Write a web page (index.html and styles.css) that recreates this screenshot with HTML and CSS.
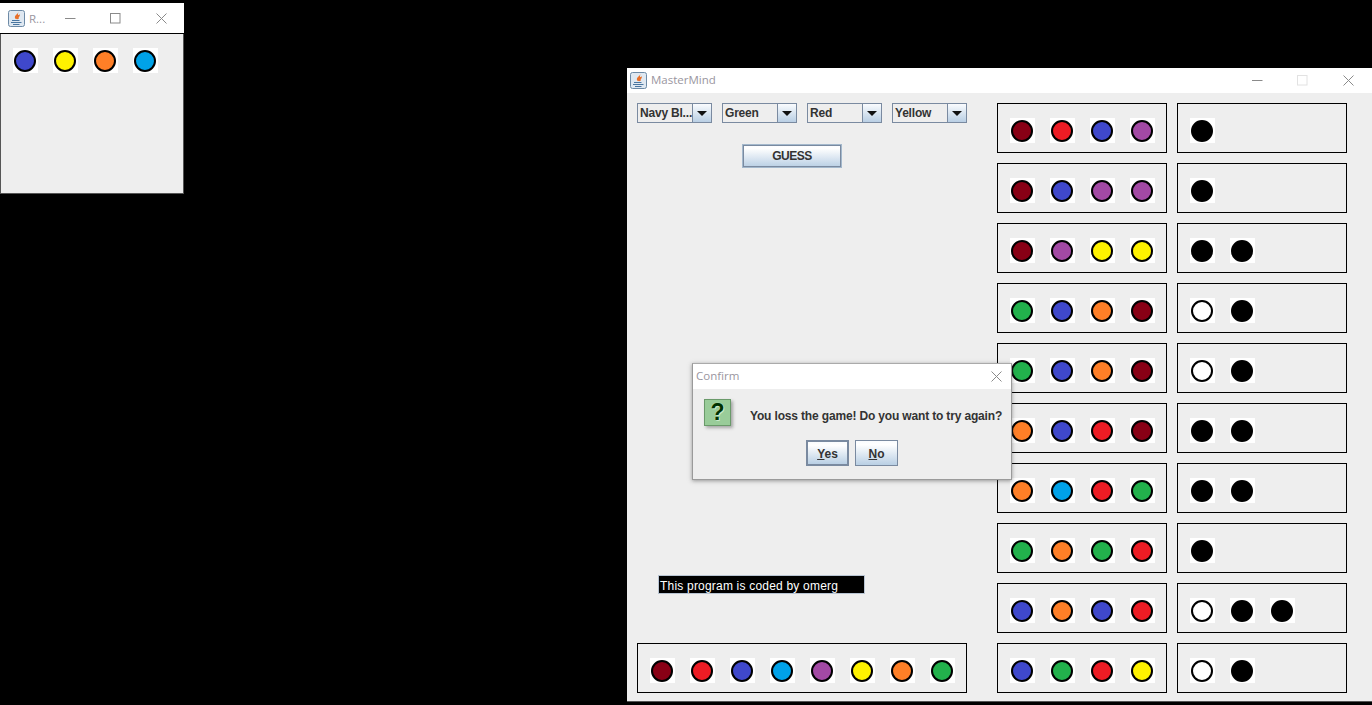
FILE: index.html

```html
<!DOCTYPE html>
<html lang="en">
<head>
  <meta charset="UTF-8" />
  <title>MasterMind</title>
  <link rel="stylesheet" href="styles.css">
</head>
<body>

  <svg class="defs" width="0" height="0">
    <symbol id="java" viewBox="0 0 17 17">
      <rect x="0.5" y="0.5" width="16" height="16" rx="2" fill="#dfe8f1" stroke="#6d8aa6"/>
      <path d="M10 1.5c1 2.500-4 3.500-3 6.500 0.500 1.500 3 1.500 4 0.500-1.500-1 2-2.500 0.500-4.500 0 1-1.500 1.500-1.500 0.500 0-1 0.500-2-0-3z" fill="#e8702a"/>
      <path d="M4 10.500h7.500M3 12.500h10.500M5 14.500h6.500" stroke="#4a76a0" stroke-width="1" fill="none"/>
    </symbol>
    <symbol id="min" viewBox="0 0 11 11"><path d="M0 5.500h10.500" stroke="currentColor" fill="none"/></symbol>
    <symbol id="max" viewBox="0 0 11 11"><rect x="0.500" y="0.500" width="9.500" height="9.500" stroke="currentColor" fill="none"/></symbol>
    <symbol id="close" viewBox="0 0 11 11"><path d="M0.500 0.500l10 10M10.500 0.500l-10 10" stroke="currentColor" fill="none"/></symbol>
  </svg>

  <!-- secret code window -->
  <div class="window code-window">
    <div class="titlebar code-titlebar">
      <svg class="app-icon"><use href="#java"/></svg>
      <span class="title">R...</span>
      <div class="controls">
        <span class="ctl"><svg><use href="#min"/></svg></span>
        <span class="ctl"><svg><use href="#max"/></svg></span>
        <span class="ctl"><svg><use href="#close"/></svg></span>
      </div>
    </div>
    <div class="code-body">
      <span class="peg blue"></span>
      <span class="peg yellow"></span>
      <span class="peg orange"></span>
      <span class="peg cyan"></span>
    </div>
  </div>

  <!-- game window -->
  <div class="window game-window">
    <div class="titlebar game-titlebar">
      <svg class="app-icon"><use href="#java"/></svg>
      <span class="title">MasterMind</span>
      <div class="controls">
        <span class="ctl"><svg><use href="#min"/></svg></span>
        <span class="ctl off"><svg><use href="#max"/></svg></span>
        <span class="ctl"><svg><use href="#close"/></svg></span>
      </div>
    </div>

    <div class="game-body">
      <div class="left">
        <div class="combos">
          <div class="combo"><span class="combo-text">Navy Bl...</span><span class="combo-btn"></span></div>
          <div class="combo"><span class="combo-text">Green</span><span class="combo-btn"></span></div>
          <div class="combo"><span class="combo-text">Red</span><span class="combo-btn"></span></div>
          <div class="combo"><span class="combo-text">Yellow</span><span class="combo-btn"></span></div>
        </div>
        <button class="btn guess">GUESS</button>
        <div class="credit">This program is coded by omerg</div>
        <div class="box palette">
          <span class="peg maroon"></span>
          <span class="peg red"></span>
          <span class="peg blue"></span>
          <span class="peg cyan"></span>
          <span class="peg purple"></span>
          <span class="peg yellow"></span>
          <span class="peg orange"></span>
          <span class="peg green"></span>
        </div>
      </div>

      <div class="board">
        <div class="box"><span class="peg maroon"></span><span class="peg red"></span><span class="peg blue"></span><span class="peg purple"></span></div>
        <div class="box"><span class="peg black"></span></div>

        <div class="box"><span class="peg maroon"></span><span class="peg blue"></span><span class="peg purple"></span><span class="peg purple"></span></div>
        <div class="box"><span class="peg black"></span></div>

        <div class="box"><span class="peg maroon"></span><span class="peg purple"></span><span class="peg yellow"></span><span class="peg yellow"></span></div>
        <div class="box"><span class="peg black"></span><span class="peg black"></span></div>

        <div class="box"><span class="peg green"></span><span class="peg blue"></span><span class="peg orange"></span><span class="peg maroon"></span></div>
        <div class="box"><span class="peg white"></span><span class="peg black"></span></div>

        <div class="box"><span class="peg green"></span><span class="peg blue"></span><span class="peg orange"></span><span class="peg maroon"></span></div>
        <div class="box"><span class="peg white"></span><span class="peg black"></span></div>

        <div class="box"><span class="peg orange"></span><span class="peg blue"></span><span class="peg red"></span><span class="peg maroon"></span></div>
        <div class="box"><span class="peg black"></span><span class="peg black"></span></div>

        <div class="box"><span class="peg orange"></span><span class="peg cyan"></span><span class="peg red"></span><span class="peg green"></span></div>
        <div class="box"><span class="peg black"></span><span class="peg black"></span></div>

        <div class="box"><span class="peg green"></span><span class="peg orange"></span><span class="peg green"></span><span class="peg red"></span></div>
        <div class="box"><span class="peg black"></span></div>

        <div class="box"><span class="peg blue"></span><span class="peg orange"></span><span class="peg blue"></span><span class="peg red"></span></div>
        <div class="box"><span class="peg white"></span><span class="peg black"></span><span class="peg black"></span></div>

        <div class="box"><span class="peg blue"></span><span class="peg green"></span><span class="peg red"></span><span class="peg yellow"></span></div>
        <div class="box"><span class="peg white"></span><span class="peg black"></span></div>
      </div>
    </div>

    <!-- confirm dialog -->
    <div class="dialog">
      <div class="dialog-title">
        <span class="title">Confirm</span>
        <svg class="dialog-close"><use href="#close"/></svg>
      </div>
      <div class="dialog-msg">
        <div class="question">?</div>
        <div class="msg-text">You loss the game! Do you want to try again?</div>
      </div>
      <div class="dialog-btns">
        <button class="btn focused"><u>Y</u>es</button>
        <button class="btn"><u>N</u>o</button>
      </div>
    </div>
  </div>

</body>
</html>
```

FILE: styles.css

```css
html, body {
  margin: 0;
  height: 100%;
}
body {
  background: #000;
  font-family: "Liberation Sans", Arial, sans-serif;
  overflow: hidden;
}
.defs {
  display: block;
  height: 0;
}

/* windows */
.window {
  position: absolute;
  box-sizing: border-box;
  background: #eeeeee;
  display: flex;
  flex-direction: column;
}
.code-window {
  left: 0;
  top: 3px;
  width: 184px;
  height: 191px;
  border: 1px solid #555;
  border-top: 0;
}
.game-window {
  left: 627px;
  top: 68px;
  width: 745px;
  height: 634px;
  border-bottom: 1px solid #555;
}
.titlebar {
  height: 25px;
  background: #fff;
  display: flex;
  align-items: center;
  flex-shrink: 0;
}
.game-titlebar {
  padding: 0 1px 1px 3px;
  box-sizing: border-box;
}
.game-titlebar .title,
.dialog-title .title {
  margin-bottom: 2px;
}
.code-titlebar {
  height: 30px;
  border-bottom: 1px solid #000;
  margin: 0 -1px;
  padding-left: 8px;
}
.app-icon {
  width: 17px;
  height: 17px;
  margin-right: 4px;
}
.title {
  font-family: "Open Sans", "Noto Sans", sans-serif;
  font-size: 11.5px;
  color: #9a96a0;
}
.controls {
  margin-left: auto;
  display: flex;
  color: #8a8a8a;
}
.ctl {
  width: 45.500px;
  height: 24px;
  display: flex;
  align-items: center;
  justify-content: center;
}
.ctl svg {
  width: 11px;
  height: 11px;
}
.ctl.off {
  color: #e2e2e2;
}

/* pegs */
.peg {
  width: 25px;
  height: 25px;
  box-sizing: border-box;
  padding: 2px 1px 1px 1px;
  background: #fff;
  flex-shrink: 0;
  display: flex;
}
.peg::after {
  content: "";
  width: 22px;
  height: 22px;
  box-sizing: border-box;
  border: 2px solid #000;
  border-radius: 50%;
  background: var(--fill);
}
.maroon { --fill: #880015; }
.red { --fill: #ed1c24; }
.blue { --fill: #3f48cc; }
.cyan { --fill: #00a2e8; }
.purple { --fill: #a349a4; }
.yellow { --fill: #fff200; }
.orange { --fill: #ff7f27; }
.green { --fill: #22b14c; }
.black { --fill: #000; }
.white { --fill: #fff; }

.code-body {
  display: flex;
  gap: 15px;
  padding: 14px 12px;
}

/* game layout */
.game-body {
  display: flex;
  gap: 30px;
  flex: 1;
  padding: 10px 0 0 10px;
}
.left {
  width: 330px;
  height: 590px;
  display: flex;
  flex-direction: column;
}
.combos {
  display: flex;
  gap: 10px;
}
.combo {
  width: 75px;
  height: 20px;
  box-sizing: border-box;
  border: 1px solid #7a8aa0;
  display: flex;
  font-size: 12px;
  font-weight: bold;
  color: #333;
}
.combo-text {
  flex: 1;
  padding-left: 2px;
  line-height: 19px;
  letter-spacing: -0.2px;
  white-space: nowrap;
}
.combo-btn {
  width: 19px;
  box-sizing: border-box;
  border-left: 1px solid #7a8aa0;
  background: linear-gradient(#fafcfe, #b9cfe4);
  display: flex;
  align-items: center;
  justify-content: center;
}
.combo-btn::after {
  content: "";
  border-top: 5px solid #111;
  border-left: 5px solid transparent;
  border-right: 5px solid transparent;
}
.btn {
  font-family: "Liberation Sans", Arial, sans-serif;
  font-size: 12px;
  font-weight: bold;
  color: #333;
  padding: 0;
  border: 1px solid #7a8aa0;
  background: linear-gradient(#fafcfe, #fff 15%, #b9cfe4);
}
.guess {
  width: 100px;
  height: 24px;
  margin: 21px 0 0 105px;
  border: 1px solid #a3b8cc;
  box-shadow: inset 0 0 0 1px #7a8aa0;
  letter-spacing: -0.5px;
}
.credit {
  margin: auto 0 49px 21px;
  width: 207px;
  height: 19px;
  box-sizing: border-box;
  background: #000;
  border: 1px solid #b8c4d2;
  color: #fff;
  font-size: 12px;
  letter-spacing: 0.2px;
  line-height: 20px;
  padding-left: 1px;
  white-space: nowrap;
}
.box {
  box-sizing: border-box;
  height: 50px;
  border: 1px solid #000;
  display: flex;
  gap: 15px;
  padding: 14px 12px;
}
.board {
  display: grid;
  grid-template-columns: 170px 170px;
  grid-auto-rows: 50px;
  gap: 10px;
}

/* dialog */
.dialog {
  position: absolute;
  left: 65px;
  top: 295px;
  width: 320px;
  height: 117px;
  box-sizing: border-box;
  background: #eeeeee;
  border: 1px solid #9a9a9a;
  border-top-color: #aaa;
  box-shadow: 0 1px 4px rgba(60, 60, 60, 0.5);
  display: flex;
  flex-direction: column;
}
.dialog-title {
  height: 25px;
  box-sizing: border-box;
  background: #fff;
  display: flex;
  align-items: center;
  justify-content: space-between;
  padding: 0 9px 1px 3px;
  color: #8a8a8a;
}
.dialog-close {
  width: 11px;
  height: 11px;
}
.dialog-msg {
  display: flex;
  align-items: center;
  padding: 10px 0 0 11px;
}
.question {
  width: 27px;
  height: 27px;
  box-sizing: border-box;
  background: #9c9;
  border: 1px solid #6a9a6a;
  box-shadow: 2px 2px 3px rgba(80, 80, 80, 0.45);
  color: #003300;
  font-size: 23px;
  font-weight: bold;
  line-height: 25px;
  text-align: center;
  text-shadow: 0 0 1px #d4f0d4, 1px 1px 0 #c8e8c8;
}
.msg-text {
  margin: 6px 0 0 19px;
  font-size: 12px;
  font-weight: bold;
  letter-spacing: -0.16px;
  color: #333;
  white-space: nowrap;
}
.dialog-btns {
  display: flex;
  justify-content: flex-end;
  gap: 6px;
  padding: 14px 113px 0 0;
}
.dialog-btns .btn {
  width: 43px;
  height: 26px;
  padding-top: 1px;
}
.dialog-btns .focused {
  border: 2px solid #7a8aa0;
}
```
